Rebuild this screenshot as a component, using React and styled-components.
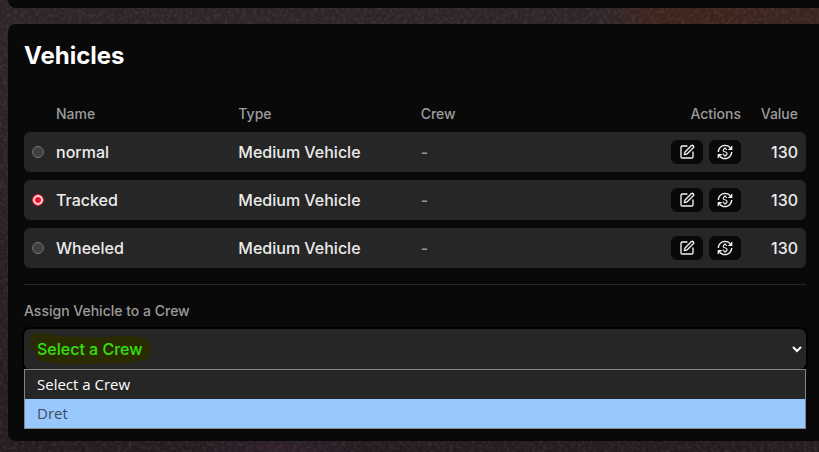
import React, { useState } from 'react'
import styled, { createGlobalStyle } from 'styled-components'
import { SquarePen } from 'lucide-react'
import { MdCurrencyExchange } from 'react-icons/md'

const vehicles = [
  { id: 'normal', name: 'normal', type: 'Medium Vehicle', crew: '-', value: 130 },
  { id: 'tracked', name: 'Tracked', type: 'Medium Vehicle', crew: '-', value: 130 },
  { id: 'wheeled', name: 'Wheeled', type: 'Medium Vehicle', crew: '-', value: 130 },
]

const crews = ['Select a Crew', 'Dret']

const App = () => {
  const [selected, setSelected] = useState('tracked')
  const [crew, setCrew] = useState(crews[0])
  const [hovered, setHovered] = useState('Dret')

  return (
    <>
      <GlobalStyle />
      <Backdrop aria-hidden="true">
        <filter id="grain">
          <feTurbulence type="fractalNoise" baseFrequency="0.28" numOctaves="4" seed="4" />
          <feColorMatrix values="0 0 0 0 0.5  0 0 0 0 0.42  0 0 0 0 0.42  1.6 0 0 0 -0.68" />
        </filter>
        <rect width="100%" height="100%" filter="url(#grain)" />
      </Backdrop>
      <Page>
        <UpperPanel />
        <Panel>
          <Title>Vehicles</Title>
          <Table>
            <thead>
              <tr>
                <HeadCell $width={24} aria-label="Selected" />
                <HeadCell>Name</HeadCell>
                <HeadCell>Type</HeadCell>
                <HeadCell>Crew</HeadCell>
                <HeadCell $width={154} $right>Actions</HeadCell>
                <HeadCell $width={57} $right>Value</HeadCell>
              </tr>
            </thead>
            <tbody>
              {vehicles.map((vehicle) => {
                const { id, name, type, crew, value } = vehicle;
                return (
                  <tr key={id}>
                    <Cell>
                      <Radio
                        name="vehicle"
                        aria-label={name}
                        checked={selected === id}
                        onChange={() => setSelected(id)}
                      />
                    </Cell>
                    <Cell>{name}</Cell>
                    <Cell>{type}</Cell>
                    <Cell $muted>{crew}</Cell>
                    <Cell>
                      <Actions>
                        <IconButton aria-label={`Edit ${name}`}><SquarePen size={16} /></IconButton>
                        <IconButton aria-label={`Sell ${name}`}><MdCurrencyExchange size={16} /></IconButton>
                      </Actions>
                    </Cell>
                    <Cell $right>{value}</Cell>
                  </tr>
                )
              })}
            </tbody>
          </Table>
          <Assign>
            <Label htmlFor="crew">Assign Vehicle to a Crew</Label>
            <SelectBox>
              <Marker viewBox="0 0 124 32" aria-hidden="true">
                <path d="M4 1 Q12 -1 24 2 Q60 6 96 3 Q116 3 121 8 Q125 18 120 26 Q104 31 78 30 Q44 33 18 29 Q7 28 7 18 Q1 16 2 8 Z" />
              </Marker>
              <Select id="crew" value={crew} onChange={(e) => setCrew(e.target.value)}>
                {crews.map((name) => <option key={name}>{name}</option>)}
              </Select>
              <Arrow viewBox="0 0 10 8" aria-hidden="true">
                <path d="M1 2 L5 6 L9 2" />
              </Arrow>
            </SelectBox>
            <Options role="listbox" aria-label="Crews">
              {crews.map((name) => (
                <Option
                  key={name}
                  role="option"
                  aria-selected={crew === name}
                  $active={hovered === name}
                  onMouseEnter={() => setHovered(name)}
                  onClick={() => setCrew(name)}
                >
                  {name}
                </Option>
              ))}
            </Options>
          </Assign>
        </Panel>
      </Page>
    </>
  )
};

const GlobalStyle = createGlobalStyle`
  *{
    box-sizing: border-box;
  }
  body{
    margin: 0;
    color: #ececec;
    background: #2a2126;
    font-family: Inter, "Liberation Sans", sans-serif;
    font-size: 16px;
    line-height: 24px;
  }
`

const Backdrop = styled.svg`
  position: fixed;
  inset: 0;
  z-index: -1;
  width: 100%;
  height: 100%;
  background:
    radial-gradient(ellipse 12% 16% at 85% 2%, #3f241e 40%, transparent),
    radial-gradient(ellipse 20% 20% at 100% 2%, #3a261f 20%, transparent),
    radial-gradient(ellipse 10% 10% at 34% 100%, #30202a, transparent),
    linear-gradient(180deg, #2e252b, #241c21);
  rect{
    opacity: .18;
  }
`

const Page = styled.main`
  padding: 0 0 11px 8px;
`

const UpperPanel = styled.div`
  height: 8px;
  margin-bottom: 16px;
  border-radius: 0 0 0 8px;
  background: #090909;
`

const Panel = styled.section`
  padding: 16px 13px 12px 16px;
  border-radius: 8px 0 0 8px;
  background: #090909;
`

const Title = styled.h2`
  margin: 0 0 24px;
  color: #fff;
  font-size: 24px;
  font-weight: 700;
  line-height: 32px;
`

const Table = styled.table`
  width: 100%;
  table-layout: fixed;
  border-spacing: 0 8px;
`

const HeadCell = styled.th`
  width: ${({ $width }) => ($width ? `${$width}px` : 'auto')};
  height: 20px;
  padding: 0 8px;
  color: #9c9c9c;
  font-size: 14px;
  font-weight: 500;
  line-height: 20px;
  text-align: ${({ $right }) => ($right ? 'right' : 'left')};
`

const Cell = styled.td`
  height: 40px;
  padding: 0 8px;
  color: ${({ $muted }) => ($muted ? '#9c9c9c' : 'inherit')};
  background: #262626;
  font-weight: 500;
  text-align: ${({ $right }) => ($right ? 'right' : 'left')};
  &:first-child{
    border-radius: 6px 0 0 6px;
  }
  &:last-child{
    border-radius: 0 6px 6px 0;
  }
`

const Radio = styled.input.attrs({ type: 'radio' })`
  appearance: none;
  display: block;
  width: 12px;
  height: 12px;
  margin: 0;
  border: 1px solid #737373;
  border-radius: 50%;
  background: #404040;
  &:checked{
    border: 1px solid #e8253b;
    background: #e5122b;
    box-shadow: inset 0 0 0 2px #fbdde0;
  }
`

const Actions = styled.div`
  display: flex;
  justify-content: flex-end;
  gap: 6px;
`

const IconButton = styled.button`
  display: flex;
  padding: 4px 8px;
  border: 0;
  border-radius: 6px;
  color: #f5f5f5;
  background: #090909;
  cursor: pointer;
`

const Assign = styled.div`
  margin-top: 8px;
  padding-top: 16px;
  border-top: 1px solid #262626;
`

const Label = styled.label`
  display: block;
  margin-bottom: 8px;
  color: #9c9c9c;
  font-size: 14px;
  font-weight: 500;
  line-height: 20px;
`

const SelectBox = styled.div`
  position: relative;
  z-index: 0;
  border-radius: 6px;
  background: #262626;
  box-shadow: 0 0 0 2px #000;
`

const Select = styled.select`
  appearance: none;
  display: block;
  width: 100%;
  height: 40px;
  padding: 0 12px;
  border: 1px solid transparent;
  outline: 0;
  color: #35e00f;
  background: transparent;
  font: inherit;
  font-weight: 500;
`

const Marker = styled.svg`
  position: absolute;
  top: 4px;
  left: 4px;
  z-index: -1;
  width: 124px;
  height: 32px;
  fill: #2b2b03;
`

const Arrow = styled.svg`
  position: absolute;
  top: 16px;
  right: 4px;
  width: 10px;
  height: 8px;
  fill: none;
  stroke: #fff;
  stroke-width: 2;
  pointer-events: none;
`

const Options = styled.ul`
  position: relative;
  margin: 0;
  padding: 0;
  border: 1px solid #858585;
  background: #262626;
  list-style: none;
`

const Option = styled.li`
  padding: 0 12px;
  color: ${({ $active }) => ($active ? '#3d4a5c' : '#fff')};
  background: ${({ $active }) => ($active ? '#99c8ff' : 'transparent')};
  font-family: "Open Sans", "Noto Sans", sans-serif;
  font-size: 15px;
  line-height: 29px;
`

export default App
